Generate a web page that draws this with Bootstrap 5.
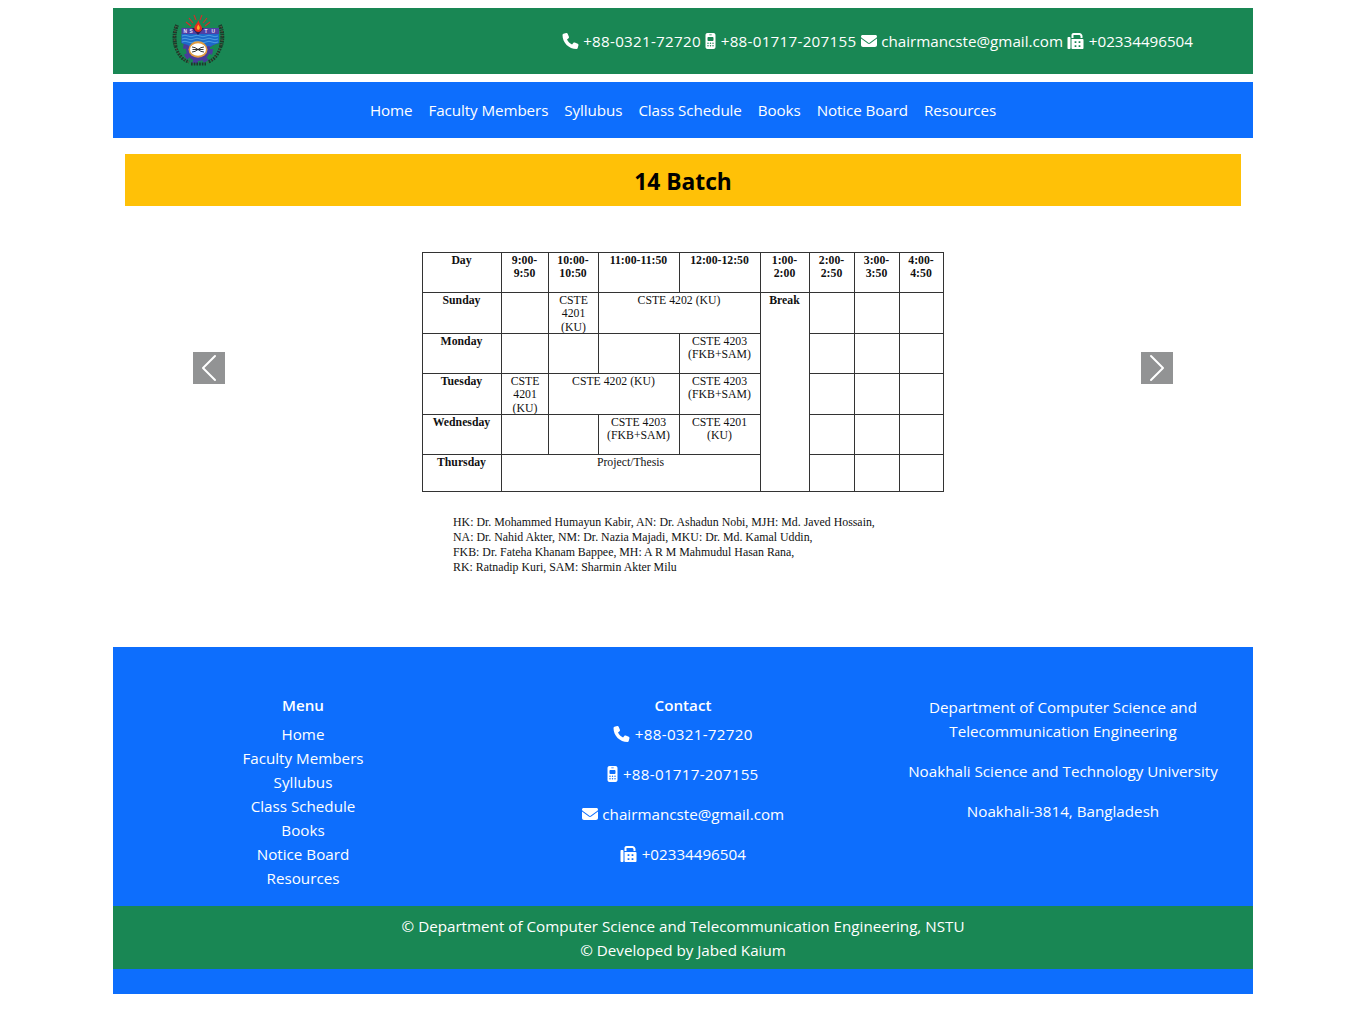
<!DOCTYPE html>
<html lang="en">
<head>
<meta charset="utf-8">
<meta name="viewport" content="width=device-width, initial-scale=1">
<title>Class Schedule - CSTE, NSTU</title>
<link href="https://cdn.jsdelivr.net/npm/bootstrap@5.3.0/dist/css/bootstrap.min.css" rel="stylesheet">
<style>
  body { font-family: "Open Sans", "Noto Sans", sans-serif; font-size: 15.2px; line-height: 24px; color: #000; }
  .page { width: 1140px; }
  .topbar { height: 66px; padding: 0 60px; }
  .crest { width: 54px; height: 56px; margin-left: -2px; }
  .ico { height: 16px; fill: #fff; vertical-align: -2px; margin-right: 4.5px; }
  .contact-line > span + span { margin-left: 4.3px; }
  .tel { letter-spacing: .27px; }
  .mainnav { height: 56px; letter-spacing: -.09px; }
  .inset { padding: 0 12px; }
  .batch { height: 52px; font-size: 22.8px; line-height: 56px; }
  .slides { height: 441px; padding-top: 46px; }
  .slides .carousel-control-prev, .slides .carousel-control-next { bottom: 117px; opacity: 1; }
  .arrow { width: 32px; height: 32px; background: #929394; }
  .sheet { font-family: "Liberation Serif", serif; font-size: 11.75px; line-height: 13.3px; color: #111; }
  .timetable { width: 522px; table-layout: fixed; border-collapse: collapse; text-align: center; }
  .timetable th, .timetable td { border: 1px solid #333; padding: 1px 1px 0 0; vertical-align: top; }
  .timetable .full { padding: 0; }
  .timetable .full span { display: block; height: 40px; padding-top: 1px; overflow: hidden; }
  .h37 { height: 37px; } .h40 { height: 40px; } .h41 { height: 41px; }
  .legend { width: 522px; padding: 23px 0 0 31px; line-height: 14.9px; font-size: 11.86px; white-space: nowrap; }
  .foot { height: 347px; padding-top: 47px; }
  .foot-cols { height: 212px; }
  .foot-head { line-height: 22px; padding-bottom: 6px; }
  .address { padding: 1px 24px 0; }
  .copyright { height: 63px; padding-top: 8px; }
</style>
</head>
<body>
<svg width="0" height="0" class="position-absolute" aria-hidden="true">
  <symbol id="phone" viewBox="0 0 512 512"><path d="M164.9 24.6c-7.700-18.600-28-28.500-47.400-23.200l-88 24C12.100 30.200 0 46 0 64C0 311.400 200.600 512 448 512c18 0 33.800-12.100 38.600-29.500l24-88c5.300-19.400-4.600-39.700-23.200-47.400l-96-40c-16.300-6.800-35.200-2.100-46.300 11.600L304.700 368C234.300 334.700 177.300 277.700 144 207.300L193.300 167c13.700-11.200 18.400-30 11.600-46.300l-40-96z"/></symbol>
  <symbol id="mobile" viewBox="0 0 320 512"><path fill-rule="evenodd" d="M0 64C0 28.700 28.700 0 64 0H256c35.300 0 64 28.700 64 64V448c0 35.300-28.700 64-64 64H64c-35.300 0-64-28.700-64-64zM64 160v64c0 17.700 14.300 32 32 32H224c17.700 0 32-14.300 32-32V160c0-17.700-14.300-32-32-32H96c-17.700 0-32 14.300-32 32zM128 48a10 10 0 0 0 0 20H192a10 10 0 0 0 0-20zM80 304a24 24 0 1 0 0 48 24 24 0 1 0 0-48zM160 304a24 24 0 1 0 0 48 24 24 0 1 0 0-48zM240 304a24 24 0 1 0 0 48 24 24 0 1 0 0-48zM80 384a24 24 0 1 0 0 48 24 24 0 1 0 0-48zM160 384a24 24 0 1 0 0 48 24 24 0 1 0 0-48zM240 384a24 24 0 1 0 0 48 24 24 0 1 0 0-48z"/></symbol>
  <symbol id="mail" viewBox="0 0 512 512"><path d="M48 64C21.500 64 0 85.500 0 112c0 15.100 7.100 29.300 19.200 38.400L236.800 313.600c11.400 8.500 27 8.500 38.400 0L492.800 150.400c12.100-9.100 19.200-23.300 19.200-38.400c0-26.500-21.500-48-48-48H48zM0 176V384c0 35.300 28.700 64 64 64H448c35.300 0 64-28.700 64-64V176L294.400 339.200c-22.800 17.100-54 17.100-76.800 0L0 176z"/></symbol>
  <symbol id="fax" viewBox="0 0 512 512"><path fill-rule="evenodd" d="M128 64v96h64V64H386.700L416 93.300V160h64V93.300c0-17-6.700-33.300-18.700-45.300L432 18.700C420 6.700 403.700 0 386.700 0H192c-35.300 0-64 28.700-64 64zM0 160V480c0 17.700 14.300 32 32 32H64c17.700 0 32-14.300 32-32V160c0-17.700-14.300-32-32-32H32c-17.700 0-32 14.300-32 32zM480 192H128V480c0 17.700 14.300 32 32 32H480c17.700 0 32-14.300 32-32V224c0-17.700-14.300-32-32-32zM228 260h56v56h-56zM356 260h56v56h-56zM228 388h56v56h-56zM356 388h56v56h-56z"/></symbol>
</svg>

<div class="page mx-auto pt-2">
  <header class="topbar bg-success text-white d-flex align-items-center justify-content-between">
    <svg class="crest" viewBox="0 0 54 56" role="img" aria-label="NSTU crest">
      <g stroke="#d82c2a" stroke-width="1.100"><path d="M15 9l5 4M18 5l4 5M23 2l2 5M31 2l-2 5M36 5l-4 5M39 9l-5 4"/></g>
      <circle cx="27" cy="36" r="12" fill="#4a3b9b"/>
      <circle cx="27" cy="36" r="13" fill="none" stroke="#4a3b9b" stroke-width="4" stroke-dasharray="5 5.210"/>
      <path d="M10.500 15h37.500v15q-7 2-8 4H18.500q-1-2-8-4z" fill="#4e40a6"/>
      <path d="M10.500 21h37.500v9q-7 2-8 3H18.500q-1-1-8-3z" fill="#1c6acb"/>
      <g fill="none" stroke="#5cabe6" stroke-width=".8"><path d="M11 23q3-1.500 6 0t6 0 6 0 6 0 6 0 6 0M11 26q3-1.500 6 0t6 0 6 0 6 0 6 0 6 0M11 29q3-1.500 6 0t6 0 6 0 6 0 6 0 6 0"/></g>
      <path d="M21 15h12l-6 7z" fill="#2e1c55"/>
      <path d="M27.500 7c-1 4-5 5-4 9 1 4 6.500 4 7.500 0 .6-3-2.500-4-3.500-9z" fill="#e62b1e"/><path d="M27.300 11.500c-2 3-2 4.500 0 5.500 2-1 2-2.500 0-5.500z" fill="#ffae25"/>
      <g fill="#e8e4ff" font-family="Liberation Sans" font-weight="bold" font-size="4.800"><text x="12.500" y="20">N</text><text x="18.500" y="20">S</text><text x="33.500" y="20">T</text><text x="40.500" y="20">U</text></g>
      <ellipse cx="27" cy="36.500" rx="9.500" ry="8.300" fill="#e09a3c"/>
      <ellipse cx="27" cy="36.500" rx="8" ry="6.200" fill="#fff"/>
      <path d="M21 34q3 0 6 2.500t6 2.500M21 39q3 0 6-2.500t6-2.500M21.500 36.500h11" stroke="#222" stroke-width=".9" fill="none"/>
      <g fill="none" stroke="#1c3a2a" stroke-width="4"><path d="M6 12Q2 22 4.500 33M49 12Q53 22 50 33" stroke-dasharray="1.300 .7 2 .6"/><path d="M4.500 33Q8 46 18 49M50 33Q46 46 37 49M20 51h15" stroke-width="3.200" stroke-dasharray="1.700 1"/></g>
      <path d="M5 13Q2 25 5 35Q10 47 20 50M50 13Q53 25 49 35Q44 47 36 50" fill="none" stroke="#86403a" stroke-width=".8" stroke-dasharray="1.500 3"/>
    </svg>
    <div class="contact-line d-flex">
      <span class="tel"><svg class="ico" width="17"><use href="#phone"/></svg>+88-0321-72720</span>
      <span class="tel"><svg class="ico" width="11"><use href="#mobile"/></svg>+88-01717-207155</span>
      <span><svg class="ico" width="16"><use href="#mail"/></svg>chairmancste@gmail.com</span>
      <span><svg class="ico" width="17"><use href="#fax"/></svg>+02334496504</span>
    </div>
  </header>

  <nav class="mainnav mt-2 bg-primary d-flex align-items-center justify-content-center">
    <a class="nav-link text-white px-2" href="#">Home</a>
    <a class="nav-link text-white px-2" href="#">Faculty Members</a>
    <a class="nav-link text-white px-2" href="#">Syllubus</a>
    <a class="nav-link text-white px-2" href="#">Class Schedule</a>
    <a class="nav-link text-white px-2" href="#">Books</a>
    <a class="nav-link text-white px-2" href="#">Notice Board</a>
    <a class="nav-link text-white px-2" href="#">Resources</a>
  </nav>

  <main class="inset mt-3">
    <h1 class="batch bg-warning text-center fw-bold mb-0">14 Batch</h1>
    <div class="carousel slides" id="schedule">
      <div class="sheet d-flex flex-column align-items-center">
        <table class="timetable">
          <colgroup><col width="79"><col width="47"><col width="50"><col width="81"><col width="81"><col width="49"><col width="45"><col width="45"><col width="44"></colgroup>
          <tr class="h40"><th>Day</th><th>9:00-<br>9:50</th><th>10:00-<br>10:50</th><th>11:00-11:50</th><th>12:00-12:50</th><th>1:00-<br>2:00</th><th>2:00-<br>2:50</th><th>3:00-<br>3:50</th><th>4:00-<br>4:50</th></tr>
          <tr class="h41"><th>Sunday</th><td></td><td class="full"><span>CSTE<br>4201<br>(KU)</span></td><td colspan="2">CSTE 4202 (KU)</td><th rowspan="5">Break</th><td></td><td></td><td></td></tr>
          <tr class="h40"><th>Monday</th><td></td><td></td><td></td><td>CSTE 4203<br>(FKB+SAM)</td><td></td><td></td><td></td></tr>
          <tr class="h41"><th>Tuesday</th><td class="full"><span>CSTE<br>4201<br>(KU)</span></td><td colspan="2">CSTE 4202 (KU)</td><td>CSTE 4203<br>(FKB+SAM)</td><td></td><td></td><td></td></tr>
          <tr class="h40"><th>Wednesday</th><td></td><td></td><td>CSTE 4203<br>(FKB+SAM)</td><td>CSTE 4201<br>(KU)</td><td></td><td></td><td></td></tr>
          <tr class="h37"><th>Thursday</th><td colspan="4">Project/Thesis</td><td></td><td></td><td></td></tr>
        </table>
        <div class="legend">HK: Dr. Mohammed Humayun Kabir, AN: Dr. Ashadun Nobi, MJH: Md. Javed Hossain,<br>NA: Dr. Nahid Akter, NM: Dr. Nazia Majadi, MKU: Dr. Md. Kamal Uddin,<br>FKB: Dr. Fateha Khanam Bappee, MH: A R M Mahmudul Hasan Rana,<br>RK: Ratnadip Kuri, SAM: Sharmin Akter Milu</div>
      </div>
      <button class="carousel-control-prev" type="button" data-bs-target="#schedule" data-bs-slide="prev" aria-label="Previous"><svg class="arrow" viewBox="0 0 16 16" fill="#fff"><path d="M11.354 1.646a.5.5 0 0 1 0 .708L5.707 8l5.647 5.646a.5.5 0 0 1-.708.708l-6-6a.5.5 0 0 1 0-.708l6-6a.5.5 0 0 1 .708 0z"/></svg></button>
      <button class="carousel-control-next" type="button" data-bs-target="#schedule" data-bs-slide="next" aria-label="Next"><svg class="arrow" viewBox="0 0 16 16" fill="#fff"><path d="M4.646 1.646a.5.5 0 0 1 .708 0l6 6a.5.5 0 0 1 0 .708l-6 6a.5.5 0 0 1-.708-.708L10.293 8 4.646 2.354a.5.5 0 0 1 0-.708z"/></svg></button>
    </div>
  </main>

  <footer class="foot bg-primary text-white text-center">
    <div class="row g-0 foot-cols">
      <div class="col-4">
        <div class="foot-head fw-semibold">Menu</div>
        <ul class="list-unstyled mb-0"><li>Home</li><li>Faculty Members</li><li>Syllubus</li><li>Class Schedule</li><li>Books</li><li>Notice Board</li><li>Resources</li></ul>
      </div>
      <div class="col-4">
        <div class="foot-head fw-semibold">Contact</div>
        <p class="tel"><svg class="ico" width="17"><use href="#phone"/></svg>+88-0321-72720</p>
        <p class="tel"><svg class="ico" width="11"><use href="#mobile"/></svg>+88-01717-207155</p>
        <p><svg class="ico" width="16"><use href="#mail"/></svg>chairmancste@gmail.com</p>
        <p><svg class="ico" width="17"><use href="#fax"/></svg>+02334496504</p>
      </div>
      <div class="col-4 address">
        <p>Department of Computer Science and Telecommunication Engineering</p>
        <p>Noakhali Science and Technology University</p>
        <p>Noakhali-3814, Bangladesh</p>
      </div>
    </div>
    <div class="copyright bg-success">© Department of Computer Science and Telecommunication Engineering, NSTU<br>© Developed by Jabed Kaium</div>
  </footer>
</div>
<script src="https://cdn.jsdelivr.net/npm/bootstrap@5.3.0/dist/js/bootstrap.bundle.min.js"></script>
</body>
</html>
